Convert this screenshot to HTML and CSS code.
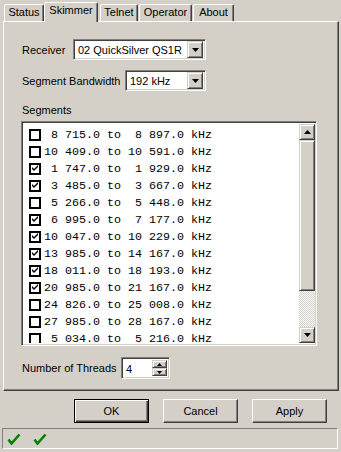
FILE: index.html
```html
<!DOCTYPE html>
<html lang="en">
<head>
  <meta charset="UTF-8">
  <title>Skimmer Settings</title>
  <link rel="stylesheet" href="styles.css">
</head>
<body>
  <div class="tabs">
    <div class="tab tab-status">Status</div>
    <div class="tab tab-active">Skimmer</div>
    <div class="tab tab-telnet">Telnet</div>
    <div class="tab tab-operator">Operator</div>
    <div class="tab tab-about">About</div>
  </div>

  <div class="panel">
    <div class="field-row">
      <label class="lbl-receiver">Receiver</label>
      <div class="combo combo-receiver">
        <span class="combo-text">02 QuickSilver QS1R</span>
        <span class="drop-btn"><svg width="7" height="4"><path d="M0 0h7L3.5 4z"/></svg></span>
      </div>
    </div>

    <div class="field-row second">
      <label class="lbl-bandwidth">Segment Bandwidth</label>
      <div class="combo combo-bandwidth">
        <span class="combo-text">192 kHz</span>
        <span class="drop-btn"><svg width="7" height="4"><path d="M0 0h7L3.5 4z"/></svg></span>
      </div>
    </div>

    <div class="group-label">Segments</div>
    <div class="listbox">
      <div class="list-items">
        <div class="row"><span class="box"></span><span class="seg"> 8 715.0 to  8 897.0 kHz</span></div>
        <div class="row"><span class="box"></span><span class="seg">10 409.0 to 10 591.0 kHz</span></div>
        <div class="row"><span class="box checked"></span><span class="seg"> 1 747.0 to  1 929.0 kHz</span></div>
        <div class="row"><span class="box checked"></span><span class="seg"> 3 485.0 to  3 667.0 kHz</span></div>
        <div class="row"><span class="box"></span><span class="seg"> 5 266.0 to  5 448.0 kHz</span></div>
        <div class="row"><span class="box checked"></span><span class="seg"> 6 995.0 to  7 177.0 kHz</span></div>
        <div class="row"><span class="box checked"></span><span class="seg">10 047.0 to 10 229.0 kHz</span></div>
        <div class="row"><span class="box checked"></span><span class="seg">13 985.0 to 14 167.0 kHz</span></div>
        <div class="row"><span class="box checked"></span><span class="seg">18 011.0 to 18 193.0 kHz</span></div>
        <div class="row"><span class="box checked"></span><span class="seg">20 985.0 to 21 167.0 kHz</span></div>
        <div class="row"><span class="box"></span><span class="seg">24 826.0 to 25 008.0 kHz</span></div>
        <div class="row"><span class="box"></span><span class="seg">27 985.0 to 28 167.0 kHz</span></div>
        <div class="row"><span class="box"></span><span class="seg"> 5 034.0 to  5 216.0 kHz</span></div>
      </div>
      <div class="scrollbar">
        <div class="sb-btn"><svg width="7" height="4"><path d="M0 4h7L3.5 0z"/></svg></div>
        <div class="sb-thumb"></div>
        <div class="sb-track"></div>
        <div class="sb-btn"><svg width="7" height="4"><path d="M0 0h7L3.5 4z"/></svg></div>
      </div>
    </div>

    <div class="field-row threads">
      <label class="lbl-threads">Number of Threads</label>
      <div class="spin">
        <span class="spin-text">4</span>
        <span class="spin-btns">
          <span class="spin-btn"><svg width="5" height="3"><path d="M0 3h5L2.5 0z"/></svg></span>
          <span class="spin-btn"><svg width="5" height="3"><path d="M0 0h5L2.5 3z"/></svg></span>
        </span>
      </div>
    </div>
  </div>

  <div class="buttons">
    <button type="button" class="btn btn-default">OK</button>
    <button type="button" class="btn">Cancel</button>
    <button type="button" class="btn">Apply</button>
  </div>

  <div class="statusbar">
    <svg class="tick" width="14" height="12"><polyline points="1.5,6.5 4.5,10.5 12.5,1.5"/></svg>
    <svg class="tick" width="14" height="12"><polyline points="1.5,6.5 4.5,10.5 12.5,1.5"/></svg>
  </div>

  <script>
    // tick the boxes that are marked as checked
    document.querySelectorAll('.box.checked').forEach(function (box) {
      box.innerHTML = '<svg width="7" height="7"><path d="M0 2L2 4L6 0L6 2L2 6L0 4Z"/></svg>';
    });
  </script>
</body>
</html>
```

FILE: styles.css
```css
* {
  box-sizing: border-box;
}
body {
  margin: 0;
  width: 341px;
  height: 452px;
  overflow: hidden;
  background: #d4d0c8;
  font-family: "Liberation Sans", Arial, sans-serif;
  font-size: 11px;
  color: #000;
}

/* tab strip */
.tabs {
  display: flex;
  align-items: flex-end;
  height: 21px;
  padding-left: 4px;
}
.tab {
  height: 17px;
  border: 1px solid;
  border-bottom: 0;
  border-color: #fff #404040 transparent #fff;
  border-radius: 2px 2px 0 0;
  box-shadow: inset -1px 0 #808080;
  text-align: center;
  line-height: 15px;
  background: #d4d0c8;
}
.tab-status { width: 40px; }
.tab-active {
  width: 54px;
  height: 20px;
  margin-bottom: -1px;
  position: relative;
  z-index: 1;
}
.tab-telnet { width: 38px; margin-left: 2px; }
.tab-operator { width: 53px; margin-left: 1px; }
.tab-about { width: 41px; margin-left: 1px; }

/* page */
.panel {
  width: 336px;
  height: 370px;
  margin-left: 3px;
  padding: 17px 0 0 18px;
  border: 1px solid;
  border-color: #fff #404040 #404040 #fff;
  box-shadow: inset -1px -1px #808080;
}
.field-row {
  display: flex;
  align-items: center;
  height: 21px;
}
.field-row.second {
  margin-top: 10px;
}
.field-row.threads {
  margin-top: 11px;
  height: 22px;
}
.lbl-receiver { width: 51px; }
.lbl-bandwidth { width: 103px; }
.lbl-threads { width: 99px; }

.combo,
.spin,
.listbox {
  border: 1px solid;
  border-color: #808080 #fff #fff #808080;
  box-shadow: inset 1px 1px #404040, inset -1px -1px #d4d0c8;
  background: #fff;
}
.combo {
  display: flex;
  align-items: center;
  height: 21px;
  padding: 2px;
}
.combo-receiver { width: 133px; }
.combo-bandwidth { width: 81px; }
.combo-text {
  flex: 1;
  padding-left: 2px;
  white-space: nowrap;
  overflow: hidden;
}
.drop-btn,
.sb-btn,
.spin-btn,
.sb-thumb {
  display: flex;
  align-items: center;
  justify-content: center;
  background: #d4d0c8;
  border: 1px solid;
  border-color: #d4d0c8 #404040 #404040 #d4d0c8;
  box-shadow: inset 1px 1px #fff, inset -1px -1px #808080;
}
.drop-btn {
  width: 16px;
  height: 17px;
}

.group-label {
  margin-top: 13px;
  height: 13px;
  line-height: 13px;
  margin-bottom: 4px;
}

/* segment list */
.listbox {
  display: flex;
  width: 296px;
  height: 225px;
  margin-left: -1px;
  padding: 2px 1px 2px 2px;
}
.list-items {
  flex: 1;
  padding-top: 2px;
  overflow: hidden;
}
.row {
  display: flex;
  align-items: center;
  height: 17px;
  padding-left: 5px;
}
.box {
  display: flex;
  align-items: center;
  justify-content: center;
  width: 12px;
  height: 12px;
  border: 2px solid #000;
  background: #fff;
  margin-right: 3px;
}
.seg {
  font-family: "Liberation Mono", "Courier New", monospace;
  font-size: 11.67px;
  line-height: 12px;
  white-space: pre;
}
.scrollbar {
  display: flex;
  flex-direction: column;
  width: 16px;
}
.sb-btn {
  height: 16px;
}
.sb-thumb {
  height: 151px;
}
.sb-track {
  flex: 1;
  background: repeating-conic-gradient(#fff 0 25%, #d4d0c8 0 50%) 0 0 / 2px 2px;
}

/* number of threads */
.spin {
  display: flex;
  width: 49px;
  height: 22px;
  padding: 2px;
}
.spin-text {
  flex: 1;
  padding-left: 2px;
  line-height: 18px;
}
.spin-btns {
  display: flex;
  flex-direction: column;
  width: 15px;
}
.spin-btn {
  flex: 1;
}

/* dialog buttons */
.buttons {
  display: flex;
  gap: 14px;
  margin-top: 8px;
  padding-left: 74px;
}
.btn {
  width: 75px;
  height: 24px;
  padding: 0;
  font: inherit;
  color: #000;
  background: #d4d0c8;
  border: 1px solid;
  border-color: #fff #404040 #404040 #fff;
  box-shadow: inset -1px -1px #808080, inset 1px 1px #d4d0c8;
}
.btn-default {
  border: 1px solid #000;
  box-shadow: inset 1px 1px #fff, inset -1px -1px #404040, inset -2px -2px #808080;
}

/* status bar */
.statusbar {
  display: flex;
  gap: 12px;
  height: 21px;
  margin: 5px 3px 0 2px;
  padding: 4px 0 0 4px;
  border: 1px solid;
  border-color: #808080 #fff #fff #808080;
}
.tick polyline {
  fill: none;
  stroke: #008000;
  stroke-width: 2.6;
}
```
